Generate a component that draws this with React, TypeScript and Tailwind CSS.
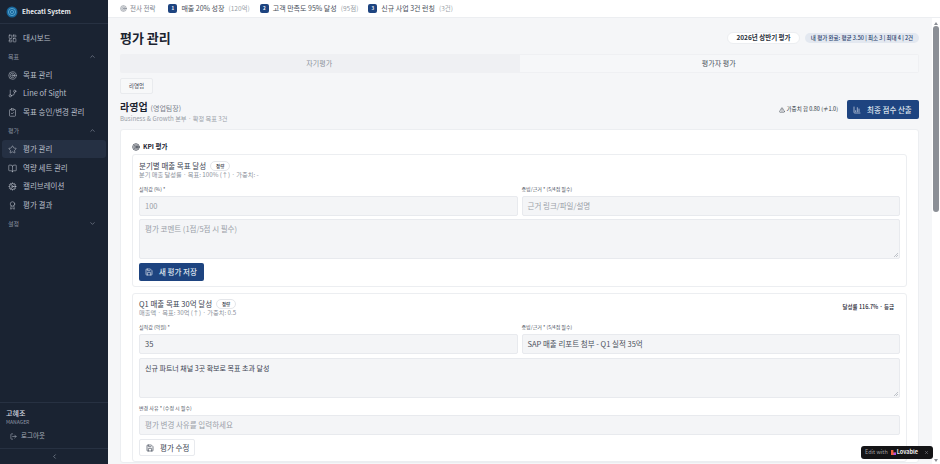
import React from "react";
import {
  Award,
  BookOpen,
  ChartColumn,
  ChevronDown,
  ChevronLeft,
  ChevronUp,
  ClipboardCheck,
  Cog,
  GitBranch,
  LayoutDashboard,
  LogOut,
  Save,
  Star,
  Target,
  TriangleAlert,
  X,
} from "lucide-react";

const font = { fontFamily: '"Noto Sans CJK KR", "Noto Sans", sans-serif' };

function NavItem({ icon: Icon, label, active }: { icon: React.ElementType; label: string; active?: boolean }) {
  return (
    <div className={"mx-[2px] flex h-[18px] items-center gap-[6px] rounded-[3px] pl-[6px] text-[7.5px] text-[#b9bfc9] " + (active ? "bg-[#253043]" : "")}>
      <Icon size={9} strokeWidth={1.5} />
      <span>{label}</span>
    </div>
  );
}

function NavGroup({ label, open }: { label: string; open?: boolean }) {
  return (
    <div className="flex h-[19px] items-center justify-between pl-[8px] pr-[12px] text-[6px] text-[#8d95a3]">
      <span>{label}</span>
      {open ? <ChevronUp size={7} /> : <ChevronDown size={7} />}
    </div>
  );
}

function Sidebar() {
  return (
    <aside className="flex h-full w-[108px] shrink-0 flex-col bg-[#1a2332]">
      <div className="flex h-[24px] items-center gap-[4px] border-b border-[#273142] pl-[6px]">
        <svg width="12" height="12" viewBox="0 0 12 12" fill="none">
          <circle cx="6" cy="6" r="5.5" fill="#17669b" />
          <circle cx="6" cy="6" r="3.6" stroke="#7cc4ea" strokeWidth="0.6" />
          <circle cx="6" cy="6" r="1.6" stroke="#7cc4ea" strokeWidth="0.6" />
        </svg>
        <span className="text-[6.5px] font-bold text-[#e8ebef]">Ehecatl System</span>
      </div>
      <div className="flex flex-col pt-[5px]">
        <NavItem icon={LayoutDashboard} label="대시보드" />
        <NavGroup label="목표" open />
        <NavItem icon={Target} label="목표 관리" />
        <NavItem icon={GitBranch} label="Line of Sight" />
        <div className="mt-[1px]">
          <NavItem icon={ClipboardCheck} label="목표 승인/변경 관리" />
        </div>
        <NavGroup label="평가" open />
        <NavItem icon={Star} label="평가 관리" active />
        <div className="mt-[1px]">
          <NavItem icon={BookOpen} label="역량 세트 관리" />
        </div>
        <NavItem icon={Cog} label="캘리브레이션" />
        <div className="mt-[1px]">
          <NavItem icon={Award} label="평가 결과" />
        </div>
        <NavGroup label="설정" />
      </div>
      <div className="mt-auto border-t border-[#273142] pl-[6px] pt-[5px] pb-[5px]">
        <div className="text-[7px] font-medium leading-[10px] text-[#d8dce2]">고혜조</div>
        <div className="text-[5px] leading-[8px] text-[#8d95a3]">MANAGER</div>
        <div className="mt-[3px] flex h-[14px] items-center gap-[4px] pl-[4px] text-[6.5px] text-[#a6adb8]">
          <LogOut size={7} />
          <span>로그아웃</span>
        </div>
      </div>
      <div className="flex h-[16px] items-center justify-center border-t border-[#273142] text-[#9aa2af]">
        <ChevronLeft size={7} />
      </div>
    </aside>
  );
}

function Goal({ n, label, note }: { n: number; label: string; note: string }) {
  return (
    <div className="flex items-center gap-[4px]">
      <span className="flex h-[9px] w-[9px] items-center justify-center rounded-[2px] bg-[#1e4480] text-[4.5px] font-bold text-white">{n}</span>
      <span className="text-[7px] text-[#4a505b]">{label}</span>
      <span className="text-[6.5px] text-[#9a9fa8]">{note}</span>
    </div>
  );
}

function TopBar() {
  return (
    <div className="flex h-[18px] shrink-0 items-center gap-[10px] border-b border-[#eceef1] bg-white pl-[12px]">
      <div className="mr-[3px] flex items-center gap-[3px] text-[6.5px] text-[#7b818b]">
        <Target size={7} />
        <span>전사 전략</span>
      </div>
      <Goal n={1} label="매출 20% 성장" note="(120억)" />
      <Goal n={2} label="고객 만족도 95% 달성" note="(95점)" />
      <Goal n={3} label="신규 사업 3건 런칭" note="(3건)" />
    </div>
  );
}

function Field({ label, value, filled, className }: { label?: string; value: string; filled?: boolean; className?: string }) {
  return (
    <div className={"flex min-w-0 flex-1 flex-col " + (className ?? "")}>
      {label && <div className="mb-[3px] h-[8px] text-[5px] leading-[8px] text-[#4a505b]">{label}</div>}
      <div className={"flex h-[20px] items-center rounded-[2px] border border-[#e8eaee] bg-[#f4f5f7] pl-[5px] text-[7.5px] " + (filled ? "text-[#4a505b]" : "text-[#9a9fa8]")}>
        {value}
      </div>
    </div>
  );
}

function TextArea({ value, filled }: { value: string; filled?: boolean }) {
  return (
    <div className={"relative h-[40px] rounded-[2px] border border-[#e8eaee] bg-[#f4f5f7] pl-[5px] pt-[3px] leading-[12px] " + (filled ? "text-[7px] text-[#3b4351]" : "text-[7.5px] text-[#9a9fa8]")}>
      {value}
      <svg className="absolute bottom-[1px] right-[1px]" width="4" height="4" viewBox="0 0 4 4">
        <path d="M4 0L0 4M4 2L2 4" stroke="#8b919b" strokeWidth="0.5" />
      </svg>
    </div>
  );
}

function Badge() {
  return <span className="flex h-[10px] w-[20px] items-center justify-center rounded-full border border-[#e4e6ea] bg-white text-[4.5px] font-medium text-[#2f3642]">정량</span>;
}

function Content() {
  return (
    <div className="min-w-0 flex-1 overflow-hidden bg-[#f5f6f8] pl-[12px] pr-[13px]" >
      <div className="flex h-[36px] items-center justify-between pt-[4px]">
        <h1 className="text-[13px] font-bold text-[#1b2330]">평가 관리</h1>
        <div className="flex items-center gap-[5px]">
          <span className="flex h-[12px] w-[73px] items-center justify-center rounded-full border border-[#eceef1] bg-white text-[6.5px] font-bold text-[#2a303b]">2026년 상반기 평가</span>
          <span className="flex h-[10px] w-[114px] items-center justify-center rounded-full bg-[#e3e8f0] text-[5.5px] font-medium text-[#27406b]">내 평가 완료: 평균 3.50 | 최소 3 | 최대 4 | 2건</span>
        </div>
      </div>
      <div className="flex h-[19px] rounded-[2px] bg-[#eff0f3] text-[7px]">
        <div className="flex flex-1 items-center justify-center text-[#8b919b]">자기평가</div>
        <div className="m-[1px] flex flex-1 items-center justify-center bg-[#f6f7f9] text-[#4a505b]">평가자 평가</div>
      </div>
      <div className="mt-[5px] flex h-[16px] w-[33px] items-center justify-center rounded-[2px] border border-[#e9ebee] bg-[#f7f8f9] text-[5.5px] text-[#3b4351]">라영업</div>
      <div className="mt-[6px] flex items-start justify-between">
        <div>
          <div className="flex items-baseline gap-[3px] leading-[13px]">
            <span className="text-[10px] font-bold text-[#1b2330]">라영업</span>
            <span className="text-[7px] text-[#7b818b]">(영업팀장)</span>
          </div>
          <div className="text-[6.2px] leading-[8px] text-[#9a9fa8]">Business &amp; Growth 본부 · 확정 목표 3건</div>
        </div>
        <div className="flex items-center gap-[9px]">
          <div className="flex items-center gap-[2px] text-[5.5px] text-[#2f3642]">
            <TriangleAlert size={6} />
            <span>가중치 합 0.80 (≠1.0)</span>
          </div>
          <button className="flex h-[19px] w-[72px] items-center gap-[6px] rounded-[2px] bg-[#1e4480] pl-[6px] text-[7.5px] font-medium text-[#dfe5ee]">
            <ChartColumn size={8} />
            최종 점수 산출
          </button>
        </div>
      </div>
      <div className="mt-[6px] rounded-[3px] border border-[#eceef1] bg-white px-[11px] pt-[9px]">
        <div className="flex h-[15px] items-center gap-[3px] text-[6.5px] font-bold text-[#1b2330]">
          <Target size={8} />
          KPI 평가
        </div>
        <div className="rounded-[3px] border border-[#eceef1] px-[6px] pb-[5px] pt-[6px]">
          <div className="flex items-center gap-[4px]">
            <span className="text-[7.5px] leading-[10px] text-[#3b4351]">분기별 매출 목표 달성</span>
            <Badge />
          </div>
          <div className="text-[6.2px] leading-[7px] text-[#8b919b]">분기 매출 달성률 · 목표: 100% (↑) · 가중치: -</div>
          <div className="mt-[7px] flex gap-[4px]">
            <Field label="실적값 (%) *" value="100" />
            <Field label="증빙/근거 * (5/4점 필수)" value="근거 링크/파일/설명" />
          </div>
          <div className="mt-[3px]"><TextArea value="평가 코멘트 (1점/5점 시 필수)" /></div>
          <button className="mt-[4px] flex h-[18px] w-[65px] items-center gap-[6px] rounded-[2px] bg-[#1e4480] pl-[6px] text-[7.5px] font-medium text-[#dfe5ee]">
            <Save size={8} />
            새 평가 저장
          </button>
        </div>
        <div className="mt-[6px] rounded-[3px] border border-[#eceef1] px-[6px] pb-[5px] pt-[5px]">
          <div className="flex items-start justify-between">
            <div>
              <div className="flex items-center gap-[4px]">
                <span className="text-[7.5px] leading-[10px] text-[#3b4351]">Q1 매출 목표 30억 달성</span>
                <Badge />
              </div>
              <div className="text-[6.2px] leading-[7px] text-[#8b919b]">매출액 · 목표: 30억 (↑) · 가중치: 0.5</div>
            </div>
            <div className="pr-[6px] pt-[4px] text-[5.5px] font-medium text-[#1b2330]">달성률 116.7% · 등급</div>
          </div>
          <div className="mt-[7px] flex gap-[4px]">
            <Field label="실적값 (억원) *" value="35" filled />
            <Field label="증빙/근거 * (5/4점 필수)" value="SAP 매출 리포트 첨부 - Q1 실적 35억" filled />
          </div>
          <div className="mt-[4px]"><TextArea value="신규 파트너 채널 3곳 확보로 목표 초과 달성" filled /></div>
          <Field className="mt-[6px]" label="변경 사유 * (수정 시 필수)" value="평가 변경 사유를 입력하세요" />
          <button className="mt-[4px] flex h-[17px] w-[56px] items-center gap-[6px] rounded-[2px] border border-[#e8eaee] bg-white pl-[6px] text-[7.5px] text-[#3b4351]">
            <Save size={8} />
            평가 수정
          </button>
        </div>
      </div>
    </div>
  );
}

function ScrollBar() {
  return (
    <div className="flex w-[8px] shrink-0 flex-col items-center bg-white">
      <div className="mt-[4px] h-0 w-0 border-x-[2.5px] border-b-[3px] border-x-transparent border-b-[#8b8f96]" />
      <div className="mt-[1px] h-[186px] w-[6px] rounded-full bg-[#8b8f96]" />
      <div className="mt-auto mb-[2px] h-0 w-0 border-x-[2.5px] border-t-[3px] border-x-transparent border-t-[#8b8f96]" />
    </div>
  );
}

export default function App() {
  return (
    <div className="relative flex h-[464px] w-[940px] overflow-hidden bg-white" style={font}>
      <Sidebar />
      <div className="flex min-w-0 flex-1 flex-col">
        <TopBar />
        <div className="flex min-h-0 flex-1">
          <Content />
          <ScrollBar />
        </div>
      </div>
      <div className="absolute bottom-[5px] right-[7px] flex h-[13px] w-[72px] items-center rounded-[3px] bg-[#141416] pl-[4px] text-[5.5px]">
        <span className="text-[#a0a0a4]">Edit with</span>
        <svg className="ml-[3px]" width="5" height="5" viewBox="0 0 5 5">
          <path d="M0 0H2.4V2.6H5V5H0Z" fill="#f0603c" />
          <path d="M2.6 2.6H5V5H2.6Z" fill="#b04be0" />
        </svg>
        <span className="ml-[1px] font-bold text-[#eeeeee]">Lovable</span>
        <X className="ml-auto mr-[4px] text-[#a0a0a4]" size={5} />
      </div>
    </div>
  );
}
